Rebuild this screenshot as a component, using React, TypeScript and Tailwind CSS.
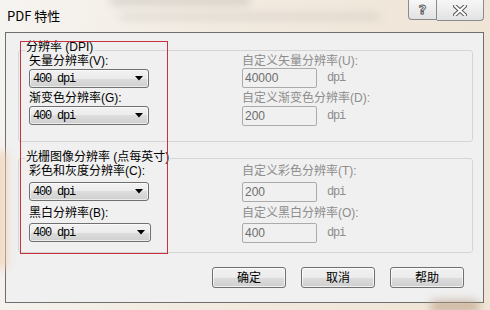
import React from "react";

const cjk = "font-['Liberation_Sans','Noto_Sans_CJK_SC',sans-serif]";
const mono = "font-['Liberation_Mono',monospace] tracking-[-1.2px]";

function Select({ w = 120 }: { w?: number }) {
  return (
    <div
      className="flex h-[19px] items-center rounded-[3px] border border-[#707070] bg-[linear-gradient(#f2f2f2_0%,#ebebeb_50%,#dddddd_50%,#cfcfcf_100%)] pl-[3px] pr-[5px] shadow-[inset_0_0_0_1px_rgba(255,255,255,0.6)]"
      style={{ width: w }}
    >
      <span className={`${mono} text-[12px] leading-[14px] text-black`}>400 dpi</span>
      <svg className="ml-auto" width="8" height="5" viewBox="0 0 8 5">
        <path d="M0 0 H8 L4 4.5 Z" fill="#000" />
      </svg>
    </div>
  );
}

function NumInput({ value }: { value: string }) {
  return (
    <div className="flex items-center">
      <div className="flex h-[20px] w-[75px] items-center rounded-[2px] border border-[#ababab] bg-[#f0f0f0] pl-[2px]">
        <span className={`${cjk} text-[12px] leading-[14px] text-[#6d6d6d]`}>{value}</span>
      </div>
      <span className={`${mono} ml-[10px] text-[12px] leading-[14px] text-[#8d8d8d]`}>dpi</span>
    </div>
  );
}

function Label({ children, disabled }: { children: React.ReactNode; disabled?: boolean }) {
  return (
    <div className={`${cjk} h-[13px] whitespace-nowrap text-[12px] leading-[13px] ${disabled ? "text-[#8d8d8d]" : "text-black"}`}>
      {children}
    </div>
  );
}

function Btn({ children }: { children: React.ReactNode }) {
  return (
    <div className={`${cjk} flex h-[21px] w-[74px] items-center justify-center rounded-[3px] border border-[#707070] bg-[linear-gradient(#f2f2f2_0%,#ebebeb_50%,#dddddd_50%,#cfcfcf_100%)] text-[12px] leading-[14px] text-black shadow-[inset_0_0_0_1px_rgba(255,255,255,0.7)]`}>
      {children}
    </div>
  );
}

export default function App() {
  return (
    <div className={`relative h-[310px] w-[490px] overflow-hidden bg-[linear-gradient(100deg,#f6f4f1_0%,#f2ebe1_40%,#efe4d5_100%)] ${cjk}`}>
      {/* blurred background through glass */}
      <div className="pointer-events-none absolute left-[110px] top-[-4px] h-[9px] w-[140px] rounded-full bg-[#9a948c] opacity-30 blur-[4px]" />
      <div className="pointer-events-none absolute left-[120px] top-[13px] h-[7px] w-[260px] rounded-full bg-[#a8a19a] opacity-25 blur-[4px]" />
      <div className="pointer-events-none absolute left-[430px] top-[300px] h-[12px] w-[50px] rounded-full bg-[#b59a80] opacity-60 blur-[4px]" />
      <div className="pointer-events-none absolute left-[-6px] top-[150px] h-[120px] w-[14px] rounded-full bg-[#f0d2b4] opacity-70 blur-[4px]" />

      {/* title bar */}
      <div className="relative flex h-[32px] items-start">
        <span className="ml-[7px] mt-[8px] font-['Noto_Sans_CJK_SC',sans-serif] text-[13px] leading-[16px] text-black">PDF 特性</span>
        <div className="ml-auto mr-[6px] flex h-[21px]">
          <div className="flex h-[20px] w-[29px] items-center justify-center rounded-bl-[4px] border border-t-0 border-[#8b8b8b] bg-[linear-gradient(#f7f7f7,#e2e2e2)]">
            <span className="font-['DejaVu_Sans',sans-serif] text-[13px] font-bold leading-[14px] text-white [-webkit-text-stroke:1px_#5a5a5a]">?</span>
          </div>
          <div className="flex h-[21px] w-[47px] items-center justify-center rounded-br-[4px] border border-l-0 border-t-0 border-[#8b8b8b] bg-[linear-gradient(#f7f7f7,#e2e2e2)]">
            <svg width="14" height="11" viewBox="0 0 14 11">
              <path d="M2 1 L12 10 M12 1 L2 10" stroke="#5a5a5a" strokeWidth="4" strokeLinecap="square" />
              <path d="M2 1 L12 10 M12 1 L2 10" stroke="#ffffff" strokeWidth="2" strokeLinecap="square" />
            </svg>
          </div>
        </div>
      </div>

      {/* client area */}
      <div className="ml-[5px] flex h-[271px] w-[479px] flex-col border border-[#6e6e6e] bg-[#f0f0f0]">
        {/* group 1 */}
        <div className="relative ml-[12px] mt-[17px] flex h-[92px] w-[455px] rounded-[3px] border border-[#d5d5d5] pl-[10px] pt-[4px]">
          <span className="absolute left-[6px] top-[-10px] bg-[#f0f0f0] px-[1px] text-[12px] leading-[12px] text-black">分辨率 (DPI)</span>
          <div className="flex w-[120px] flex-col">
            <Label>矢量分辨率(V):</Label>
            <div className="mt-[1px]"><Select /></div>
            <div className="mt-[4px]"><Label>渐变色分辨率(G):</Label></div>
            <div className="mt-[1px]"><Select /></div>
          </div>
          <div className="ml-[93px] flex flex-col">
            <Label disabled>自定义矢量分辨率(U):</Label>
            <NumInput value="40000" />
            <div className="mt-[4px]"><Label disabled>自定义渐变色分辨率(D):</Label></div>
            <div className="mt-[1px]"><NumInput value="200" /></div>
          </div>
        </div>

        {/* group 2 */}
        <div className="relative ml-[12px] mt-[16px] flex h-[95px] w-[455px] rounded-[3px] border border-[#d5d5d5] pl-[10px] pt-[6px]">
          <span className="absolute left-[6px] top-[-8px] bg-[#f0f0f0] px-[1px] text-[12px] leading-[12px] text-black">光栅图像分辨率 (点每英寸)</span>
          <div className="flex w-[122px] flex-col">
            <Label>彩色和灰度分辨率(C):</Label>
            <div className="mt-[4px]"><Select /></div>
            <div className="mt-[6px]"><Label>黑白分辨率(B):</Label></div>
            <div className="mt-[3px]"><Select w={122} /></div>
          </div>
          <div className="ml-[91px] flex flex-col">
            <Label disabled>自定义彩色分辨率(T):</Label>
            <div className="mt-[4px]"><NumInput value="200" /></div>
            <div className="mt-[5px]"><Label disabled>自定义黑白分辨率(O):</Label></div>
            <div className="mt-[3px]"><NumInput value="400" /></div>
          </div>
        </div>

        {/* buttons */}
        <div className="mr-[19px] mt-[14px] flex justify-end gap-[15px]">
          <Btn>确定</Btn>
          <Btn>取消</Btn>
          <Btn>帮助</Btn>
        </div>
      </div>

      {/* red annotation box */}
      <div className="pointer-events-none absolute left-[20px] top-[41px] h-[213px] w-[148px] border border-[#c8323c]" />
    </div>
  );
}
